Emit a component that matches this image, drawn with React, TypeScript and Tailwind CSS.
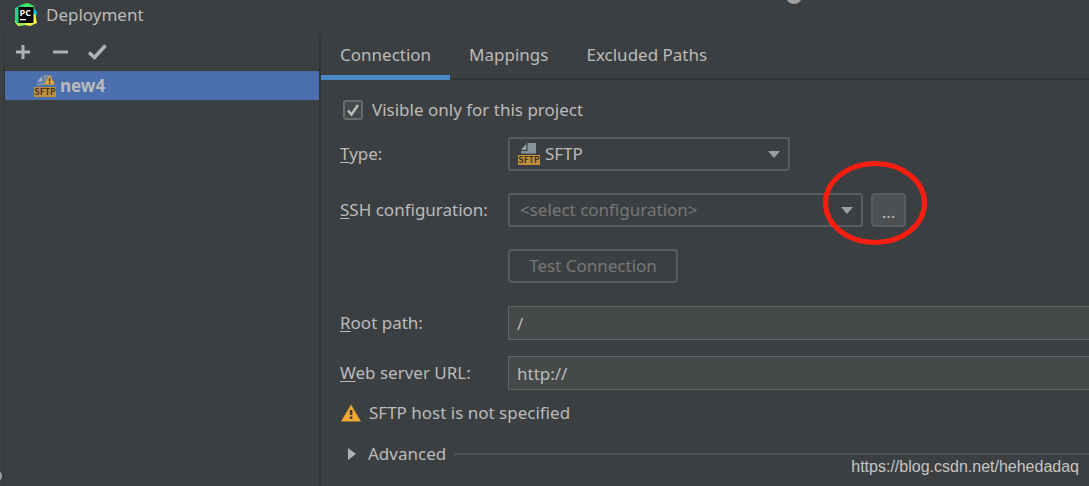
import { useState } from 'react';
import type { ReactNode } from 'react';
import clsx from 'clsx';

const TABS = ['Connection', 'Mappings', 'Excluded Paths'];

function PyCharmLogo() {
  return (
    <svg width="24" height="24" viewBox="0 0 24 24" aria-hidden="true">
      <path d="M1 5 9 1l6 2-3 8-10 8L1 13z" fill="#21d789" />
      <path d="M9 1l5-1 6 3 1 6-7 2z" fill="#3bea62" />
      <path d="M20 6l3 3-1 5-4-1z" fill="#07c3f2" />
      <path d="M2 15l8-5 11 1 2 9-7 3-5-1-7 1-3-4z" fill="#fcf84a" />
      <path d="M1 12l3-2 1 10-2 1-2-5z" fill="#21d789" />
      <path d="M4 19l8 0-1 3-7 1z" fill="#8fed5a" />
      <rect x="4.500" y="4" width="15" height="16" fill="#000" />
      <text x="5.500" y="12.500" fontSize="9" fontWeight="700" fontFamily="Open Sans, sans-serif" fill="#fff">
        PC
      </text>
      <rect x="6" y="16" width="6" height="1.3" fill="#fff" />
    </svg>
  );
}

function SftpIcon({ warning = false }: { warning?: boolean }) {
  return (
    <svg width="22" height="22" viewBox="0 0 22 22" aria-hidden="true">
      <path d="M9.500 0H18v10.500H3V8h6.500z" fill={warning ? '#7e92a6' : '#87939a'} />
      <path d="M8.300 1v5.800H3z" fill={warning ? '#a3afbd' : '#9aa7b0'} />
      {warning && (
        <>
          <path d="M15.500-1 22 10.500H9z" fill="#4b6eaf" />
          <path d="M15.500 0 21 9.500h-11z" fill="#f0a732" />
          <path d="M14.800 3h1.500v3.500h-1.500zM14.800 7.300h1.500v1.400h-1.500z" fill="#453a2c" />
        </>
      )}
      <rect y="12" width="22" height="10" fill="#bf8f3c" />
      <text
        x="11"
        y="20"
        textAnchor="middle"
        fontSize="8.500"
        fontWeight="700"
        fontFamily="Noto Sans CJK SC, sans-serif"
        fill="#44371f"
      >
        SFTP
      </text>
    </svg>
  );
}

function WarningIcon() {
  return (
    <svg width="20" height="18" viewBox="0 0 20 18" aria-hidden="true">
      <path d="M10 0.500 20 17.500H0z" fill="#f0a732" />
      <path d="M8.800 6h2.600v5H8.800zM8.800 12.500h2.600v2.500H8.800z" fill="#3c3f41" />
    </svg>
  );
}

function SelectArrow() {
  return (
    <svg
      className="pointer-events-none absolute top-3.5 right-2.5"
      width="12"
      height="7"
      viewBox="0 0 12 7"
      aria-hidden="true"
    >
      <path d="M0 0h12L6 7z" fill="#9da0a3" />
    </svg>
  );
}

function ToolButton({ label, children }: { label: string; children: ReactNode }) {
  return (
    <button type="button" aria-label={label} className="flex size-5 items-center justify-center">
      <svg width="20" height="16" viewBox="0 0 20 16" fill="none" stroke="#afb1b3" strokeWidth="3">
        {children}
      </svg>
    </button>
  );
}

function FieldLabel({ htmlFor, text }: { htmlFor: string; text: string }) {
  return (
    <label htmlFor={htmlFor} className="w-[168px] shrink-0">
      <span className="underline underline-offset-2">{text[0]}</span>
      {text.slice(1)}
    </label>
  );
}

function Sidebar() {
  return (
    <aside className="w-[316px] shrink-0 border-r-2 border-[#323435]">
      <div className="flex h-9 items-center gap-[17px] px-2">
        <ToolButton label="Add">
          <path d="M10 1v14M3 8h14" />
        </ToolButton>
        <ToolButton label="Remove">
          <path d="M3 8h15" />
        </ToolButton>
        <ToolButton label="Use as default">
          <path d="M2 8.500 7.500 13.500 18.500 1.500" strokeWidth="3.500" />
        </ToolButton>
      </div>
      <ul className="border-t border-[#37393b]">
        <li className="flex h-[29px] items-center gap-1 bg-[#4b6eaf] pl-[29px] font-bold">
          <SftpIcon warning />
          new4
        </li>
      </ul>
    </aside>
  );
}

export default function App() {
  const [tab, setTab] = useState('Connection');
  const [visible, setVisible] = useState(true);
  const [rootPath, setRootPath] = useState('/');
  const [url, setUrl] = useState('http://');

  return (
    <div className="relative flex min-h-screen flex-col overflow-hidden bg-[#3c3f41] pl-1 font-['Noto_Sans',sans-serif] text-[17px] leading-6 text-[#bbbbbb]">
      <header className="flex h-[34px] items-center gap-2 pb-1 pl-2.5">
        <PyCharmLogo />
        <h1>Deployment</h1>
      </header>

      <div className="flex flex-1 border-l border-[#323435]">
        <Sidebar />

        <main className="min-w-0 flex-1">
          <nav className="flex h-[46px] border-b-2 border-[#323435]">
            {TABS.map((name) => (
              <button
                key={name}
                type="button"
                onClick={() => setTab(name)}
                className={clsx(
                  '-mb-0.5 border-b-5 px-[19px]',
                  tab === name ? 'border-[#4a88c7]' : 'border-transparent',
                )}
              >
                {name}
              </button>
            ))}
          </nav>

          <form className="pt-[18px] pl-[19px]" onSubmit={(e) => e.preventDefault()}>
            <label className="flex items-center gap-[9px] pl-[3px]">
              <span className="relative flex size-5">
                <input
                  type="checkbox"
                  checked={visible}
                  onChange={(e) => setVisible(e.target.checked)}
                  className="size-5 appearance-none rounded-[3px] border-2 border-[#6b6b6b] bg-[#43494a]"
                />
                {visible && (
                  <svg className="pointer-events-none absolute inset-0" width="20" height="20" viewBox="0 0 20 20">
                    <path d="M5 10.500 8.500 14.500 15 5" fill="none" stroke="#bbbbbb" strokeWidth="2.500" />
                  </svg>
                )}
              </span>
              Visible only for this project
            </label>

            <div className="mt-[15px] flex items-center">
              <FieldLabel htmlFor="type" text="Type:" />
              <div className="relative w-[282px]">
                <span className="pointer-events-none absolute top-1.5 left-2.5">
                  <SftpIcon />
                </span>
                <select
                  id="type"
                  className="block h-[34px] w-full appearance-none rounded-[3px] border-2 border-[#5a5c5d] bg-transparent pl-[35px]"
                >
                  <option>SFTP</option>
                </select>
                <SelectArrow />
              </div>
            </div>

            <div className="mt-[22px] flex items-center">
              <FieldLabel htmlFor="ssh" text="SSH configuration:" />
              <div className="relative flex gap-2">
                <div className="relative w-[355px]">
                  <select
                    id="ssh"
                    className="block h-[34px] w-full appearance-none rounded-[3px] border-2 border-[#5a5c5d] bg-transparent pl-2.5 text-[#777777]"
                  >
                    <option>&lt;select configuration&gt;</option>
                  </select>
                  <SelectArrow />
                </div>
                <button
                  type="button"
                  aria-label="Browse configurations"
                  className="h-[34px] w-[35px] rounded-[4px] border-2 border-[#5a5c5d] bg-[#4c5052] pt-1"
                >
                  ...
                </button>
                <svg
                  className="pointer-events-none absolute -top-8 left-[315px]"
                  width="104"
                  height="84"
                  viewBox="0 0 104 84"
                  fill="none"
                  aria-hidden="true"
                >
                  <ellipse cx="52" cy="42" rx="49.500" ry="39.500" stroke="#fb1d10" strokeWidth="5" />
                </svg>
              </div>
            </div>

            <button
              type="button"
              disabled
              className="mt-[22px] ml-[168px] block h-[34px] w-[170px] rounded-[4px] border-2 border-[#5a5c5d] text-[#777777]"
            >
              Test Connection
            </button>

            <div className="mt-[23px] flex items-center">
              <FieldLabel htmlFor="root" text="Root path:" />
              <input
                id="root"
                type="text"
                value={rootPath}
                onChange={(e) => setRootPath(e.target.value)}
                className="h-[34px] min-w-0 flex-1 border border-r-0 border-[#646464] bg-[#45494a] px-2"
              />
            </div>

            <div className="mt-4 flex items-center">
              <FieldLabel htmlFor="url" text="Web server URL:" />
              <input
                id="url"
                type="text"
                value={url}
                onChange={(e) => setUrl(e.target.value)}
                className="h-[34px] min-w-0 flex-1 border border-r-0 border-[#646464] bg-[#45494a] px-2"
              />
            </div>

            <p className="mt-[11px] flex items-center gap-2 pl-px">
              <WarningIcon />
              SFTP host is not specified
            </p>

            <button type="button" className="mt-[17px] flex w-full items-center gap-2 pl-2">
              <svg width="12" height="14" viewBox="0 0 12 14" aria-hidden="true">
                <path d="M0 1v12l8-6z" fill="#afb1b3" />
              </svg>
              Advanced
              <span className="h-0.5 flex-1 bg-[#4f5152]" />
            </button>
          </form>
        </main>
      </div>

      <span className="absolute -top-3 left-[786px] size-4 rounded-full bg-[#a0a0a0]" />
      <span className="absolute bottom-1 -left-2.5 size-3 rounded-full bg-[#a0a0a0]" />
      <span className="absolute right-2.5 bottom-[7px] font-['Liberation_Sans',sans-serif] text-base text-[#c4c5c6]">
        https://blog.csdn.net/hehedadaq
      </span>
    </div>
  );
}
